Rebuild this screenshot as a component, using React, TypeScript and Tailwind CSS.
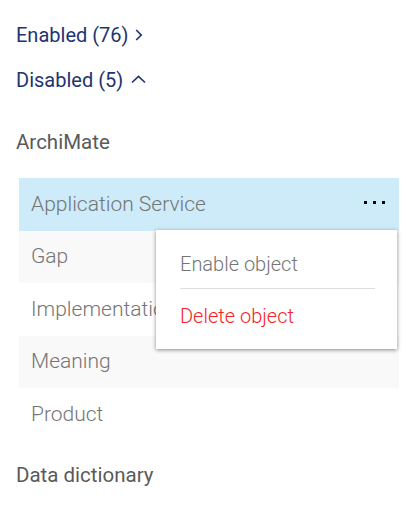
const items = ['Application Service', 'Gap', 'Implementation', 'Meaning', 'Product']

export default function App() {
  return (
    <div className="font-['Roboto',sans-serif] text-[20.5px] pl-4 pt-3 bg-white min-h-[515px]">
      <div className="h-[45px] flex items-center text-[20px] text-[#22346f]">
        Enabled (76)
        <svg width="8" height="12" viewBox="0 0 8 12" className="ml-[6px]" fill="none" stroke="currentColor" strokeWidth="1.7">
          <path d="M1.2 1 6.2 6l-5 5" />
        </svg>
      </div>
      <div className="h-[45px] flex items-center text-[20px] text-[#22346f]">
        Disabled (5)
        <svg width="15" height="9" viewBox="0 0 15 9" className="ml-[8px]" fill="none" stroke="currentColor" strokeWidth="1.7">
          <path d="M1 7.5 7.5 1.5 14 7.5" />
        </svg>
      </div>
      <div className="mt-5 h-10 flex items-center text-[#5a5a5a]">ArchiMate</div>

      <div className="relative mt-4 ml-[3px] w-[380px]">
        {items.map((name, i) => (
          <div
            key={name}
            className={
              'h-[52.5px] flex items-center pl-3 pr-[14px] font-light text-[21px] text-[#757575] ' +
              (i === 0 ? 'bg-[#cdebf8]' : i % 2 === 1 ? 'bg-[#f9f9f9]' : 'bg-white')
            }
          >
            <span className="flex-1">{name}</span>
            {i === 0 && (
              <span className="flex gap-[6px] mb-[3px]">
                <span className="w-[3px] h-[3px] bg-black" />
                <span className="w-[3px] h-[3px] bg-black" />
                <span className="w-[3px] h-[3px] bg-black" />
              </span>
            )}
          </div>
        ))}

        <div className="absolute top-[52px] right-[2px] w-[241px] h-[119px] bg-white shadow-[0_1px_4px_rgba(0,0,0,0.45)] pl-6 pr-[22px] font-light text-[20px]">
          <div className="h-[59px] flex items-center pt-[9px] text-[#757575] border-b border-[#dddddd]">Enable object</div>
          <div className="h-[51px] flex items-center pt-[3px] text-[#f52222]">Delete object</div>
        </div>
      </div>

      <div className="mt-[15px] h-10 flex items-center text-[#5a5a5a]">Data dictionary</div>
    </div>
  )
}
